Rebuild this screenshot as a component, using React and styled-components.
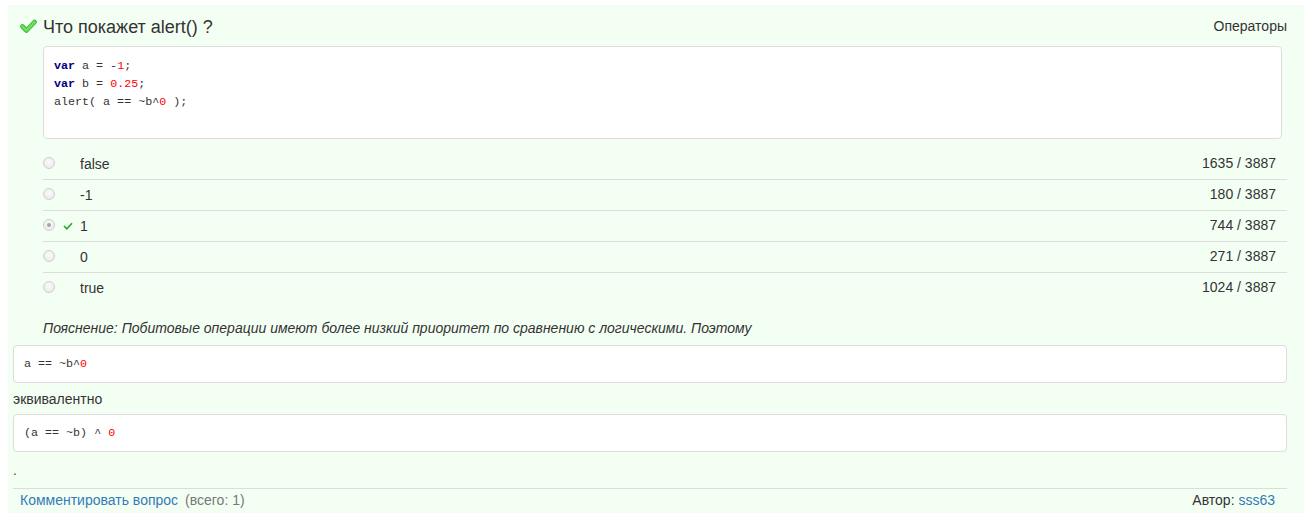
import React from "react";
import styled, { createGlobalStyle } from "styled-components";

const Global = createGlobalStyle`
  html, body { margin: 0; padding: 0; background: #fff; }
  body {
    font-family: "Liberation Sans", Arial, sans-serif;
    font-size: 14px;
    line-height: 20px;
    color: #333;
  }
`;

const Panel = styled.div`
  margin: 5px 0 0 8px;
  background: #f4fff4;
  padding: 0 17px 4px 5px;
  height: 508px;
  box-sizing: border-box;
`;

const Header = styled.div`
  display: flex;
  align-items: center;
  padding: 10px 0 0 7px;
  height: 34px;
  box-sizing: border-box;
`;

const TitleIcon = styled.svg`
  width: 17px;
  height: 14px;
  margin-right: 6px;
  margin-top: -3px;
  flex: none;
`;

const Title = styled.h3`
  margin: 0;
  flex: 1;
  font-size: 18px;
  font-weight: normal;
  line-height: 24px;
  color: #333;
`;

const Category = styled.span`
  font-size: 14px;
  color: #333;
  margin-top: -2px;
`;

const QuestionBody = styled.div`
  margin-left: 30px;
  margin-top: 7px;
`;

const Code = styled.pre`
  margin: 0;
  background: #fff;
  border: 1px solid #ddd;
  border-radius: 4px;
  font-family: "Liberation Mono", "DejaVu Sans Mono", monospace;
  font-size: 11.7px;
  line-height: 18px;
  color: #333;
  padding: ${(p) => p.$pad || "9px 10px"};
  margin-right: ${(p) => p.$mr || "0"};
  white-space: pre;
`;

const Kw = styled.span`
  color: #000080;
  font-weight: bold;
`;

const Num = styled.span`
  color: #f00;
`;

const Options = styled.div`
  margin-top: 10px;
`;

const OptionRow = styled.div`
  display: flex;
  align-items: center;
  height: 30px;
  border-top: ${(p) => (p.$first ? "none" : "1px solid #ddd")};
`;

const Radio = styled.span`
  width: 12px;
  height: 12px;
  box-sizing: border-box;
  border-radius: 50%;
  border: 1px solid #cfcfcf;
  background: radial-gradient(circle at 50% 40%, #fbfbfb 0%, #ececec 70%, #e2e2e2 100%);
  display: flex;
  align-items: center;
  justify-content: center;
  flex: none;
  margin-top: -2px;
  &::after {
    content: "";
    display: ${(p) => (p.$checked ? "block" : "none")};
    width: 4px;
    height: 4px;
    border-radius: 50%;
    background: #a5a5a5;
  }
`;

const MarkSlot = styled.span`
  width: 25px;
  display: flex;
  justify-content: center;
  flex: none;
`;

const SmallCheck = styled.svg`
  width: 10px;
  height: 8px;
`;

const OptionText = styled.span`
  flex: 1;
  color: #333;
`;

const Count = styled.span`
  padding-right: 11px;
  margin-top: -2px;
  color: #333;
`;

const Explanation = styled.p`
  margin: 15px 0 7px;
  font-style: italic;
  color: #333;
`;

const Plain = styled.p`
  margin: ${(p) => p.$m || "0"};
  color: ${(p) => p.$color || "#333"};
`;

const Footer = styled.div`
  display: flex;
  align-items: center;
  border-top: 1px solid #ddd;
  padding: 0 12px 0 7px;
  height: 21px;
  margin-top: 8px;
`;

const Link = styled.a`
  color: #337ab7;
  text-decoration: none;
`;

const Muted = styled.span`
  color: #777;
  margin-left: 7px;
  flex: 1;
`;

const options = [
  { text: "false", count: "1635 / 3887" },
  { text: "-1", count: "180 / 3887" },
  { text: "1", count: "744 / 3887", checked: true },
  { text: "0", count: "271 / 3887" },
  { text: "true", count: "1024 / 3887" },
];

export default function App() {
  return (
    <>
      <Global />
      <Panel>
        <Header>
          <TitleIcon viewBox="0 0 17 14">
            <polyline
              points="2.5,7.5 6.5,11.5 14.5,3"
              fill="none"
              stroke="#3fb53f"
              strokeWidth="4.6"
              strokeLinecap="round"
              strokeLinejoin="round"
            />
            <polyline
              points="2.5,7.5 6.5,11.5 14.5,3"
              fill="none"
              stroke="#6fe05a"
              strokeWidth="2.6"
              strokeLinecap="round"
              strokeLinejoin="round"
            />
          </TitleIcon>
          <Title>Что покажет alert() ?</Title>
          <Category>Операторы</Category>
        </Header>
        <QuestionBody>
          <Code $pad="10px 10px 27px" $mr="5px">
            <Kw>var</Kw> a = -<Num>1</Num>;{"\n"}
            <Kw>var</Kw> b = <Num>0.25</Num>;{"\n"}
            alert( a == ~b^<Num>0</Num> );
          </Code>
          <Options>
            {options.map((o, i) => (
              <OptionRow key={o.text} $first={i === 0}>
                <Radio $checked={o.checked} />
                <MarkSlot>
                  {o.checked && (
                    <SmallCheck viewBox="0 0 10 8">
                      <polyline
                        points="1,4 3.8,6.8 9,1.2"
                        fill="none"
                        stroke="#22aa22"
                        strokeWidth="1.6"
                      />
                    </SmallCheck>
                  )}
                </MarkSlot>
                <OptionText>{o.text}</OptionText>
                <Count>{o.count}</Count>
              </OptionRow>
            ))}
          </Options>
          <Explanation>
            Пояснение: Побитовые операции имеют более низкий приоритет по сравнению с логическими. Поэтому
          </Explanation>
        </QuestionBody>
        <Code>
          a == ~b^<Num>0</Num>
        </Code>
        <Plain $m="6px 0 5px">эквивалентно</Plain>
        <Code>
          (a == ~b) ^ <Num>0</Num>
        </Code>
        <Plain $m="8px 0 0" $color="#a33">.</Plain>
        <Footer>
          <Link href="#">Комментировать вопрос</Link>
          <Muted>(всего: 1)</Muted>
          <span>
            Автор: <Link href="#">sss63</Link>
          </span>
        </Footer>
      </Panel>
    </>
  );
}
